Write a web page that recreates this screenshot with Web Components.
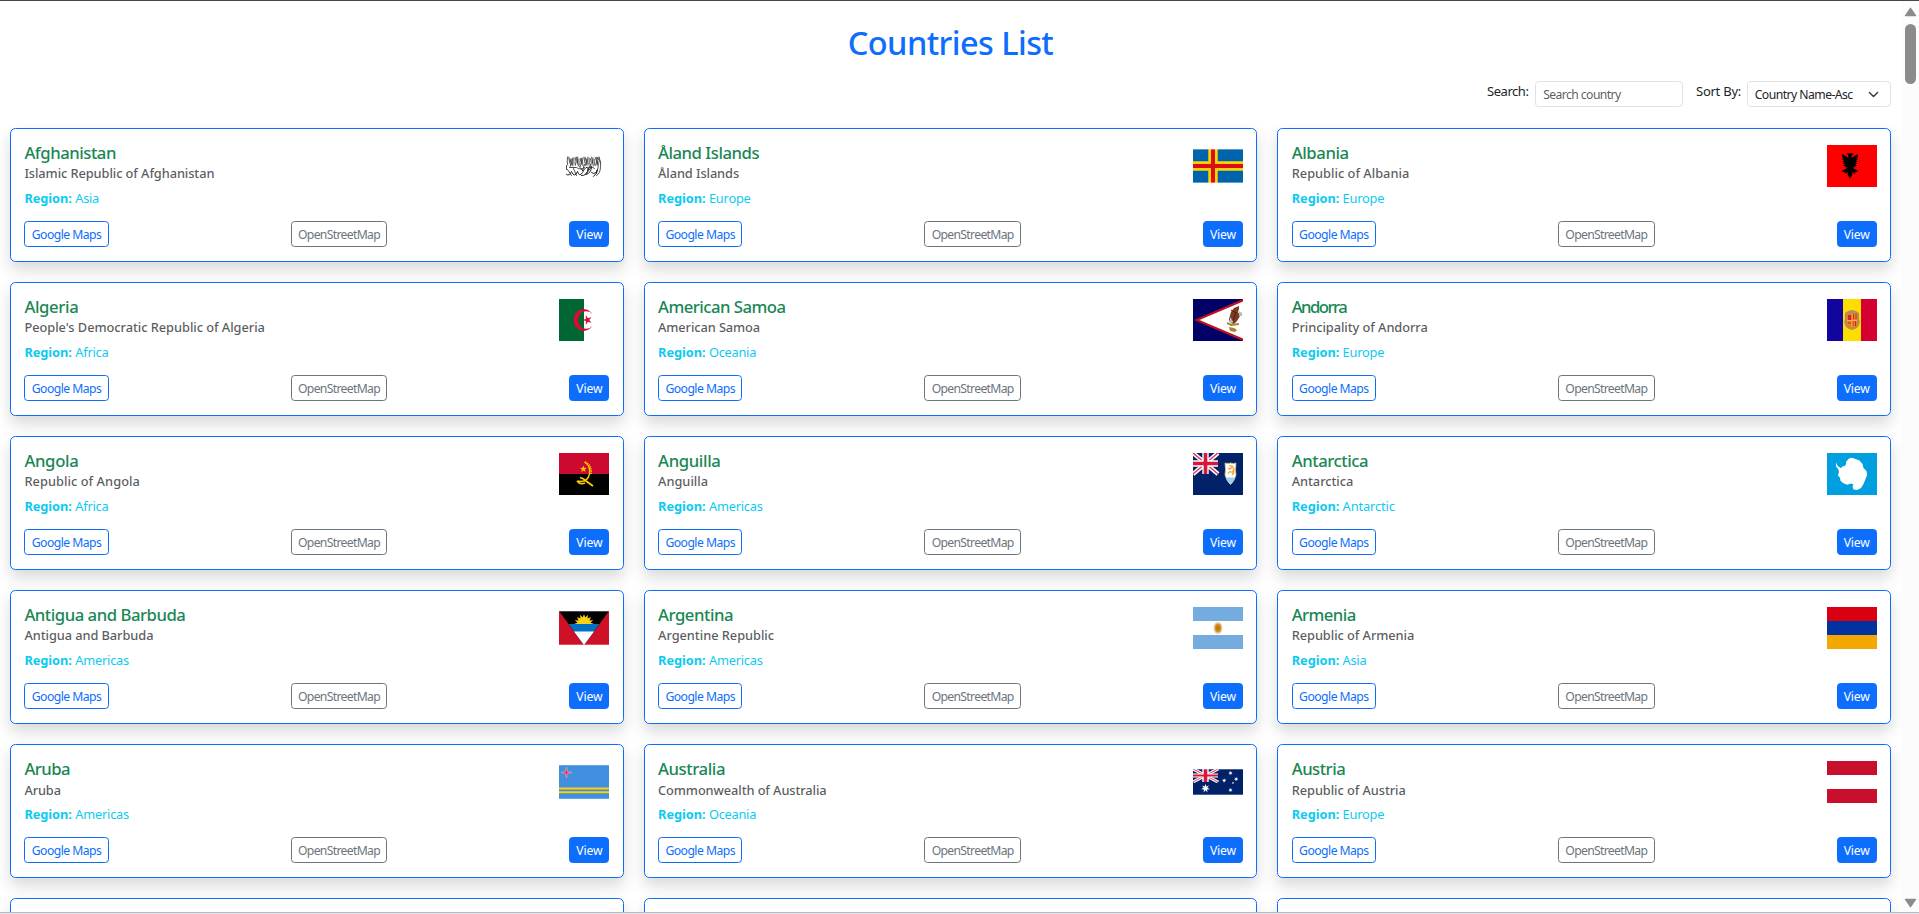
<!DOCTYPE html>
<html lang="en">
<head>
<meta charset="utf-8">
<title>Countries List</title>
<style>
html,body{margin:0;height:100%;overflow:hidden;background:#fff}
body{font-family:"Noto Sans","Open Sans",sans-serif;color:#212529}
</style>
</head>
<body>
<countries-app></countries-app>
<script>
const UNION = `<g><rect width="25" height="21" fill="#012169"/><path d="M0 0L25 21M25 0L0 21" stroke="#fff" stroke-width="4.4"/><path d="M0 0L25 21M25 0L0 21" stroke="#e4405c" stroke-width="1.5"/><path d="M12.5 0V21M0 10.5H25" stroke="#fff" stroke-width="6.4"/><path d="M12.5 0V21M0 10.5H25" stroke="#d8183a" stroke-width="3.6"/></g>`;
const star = (x, y, r, n = 5, k = .42, rot = 0) => {
  const p = [];
  for (let i = 0; i < n * 2; i++) {
    const a = Math.PI * i / n - Math.PI / 2 + rot, q = i % 2 ? r * k : r;
    p.push((x + q * Math.cos(a)).toFixed(2) + ',' + (y + q * Math.sin(a)).toFixed(2));
  }
  return `<polygon points="${p.join(' ')}"/>`;
};
const scribble = (() => {
  let d = '';
  for (let i = 0; i < 13; i++) {
    const x = 9 + i * 2.55;
    d += `M${x} ${11.5 + (i * 7 % 4) * .5}q${i % 2 ? 1.8 : -.8} 4 .2 8M${x + 1.2} ${11.6 + (i * 5 % 3)}l${i % 3 ? .2 : 1} 6`;
  }
  return d;
})();
/* each flag is [height, artwork] on a 50-unit-wide canvas */
const FLAGS = {
  af: [33, `<g transform="translate(-.5 -4.5)" fill="none" stroke="#222" stroke-linecap="round"><path d="${scribble}" stroke-width=".75"/><path d="M8 29q3 2 5-3q3 7 6 0q2 6 5 1q4-8 6-4q-2 8-7 7M27 29q4-5 6-8q0 6-5 8M33 27q4 3 6-3q-1 5-4 7" stroke-width="1"/><path d="M11 22h7q4 3 8 0M29 23q4-3 7 0M38 12q5 2 4 9q0 7-4 9M39 16q2 6-1 12M9 24l4 6M15 23l3 7M8 20v4M20 20l4 5M26 19l-2 6M32 19l-3 6" stroke-width=".8"/></g>`],
  ax: [34, `<rect width="50" height="34" fill="#0064ad"/><path d="M20 0V34M0 17H50" stroke="#ffd300" stroke-width="9.4"/><path d="M20 0V34M0 17H50" stroke="#da0e15" stroke-width="4"/><path d="M0 .4H50M0 33.6H50" stroke="#fff" stroke-opacity=".5" stroke-width=".8"/>`],
  al: [42, `<rect width="50" height="42" fill="#f00"/><path d="M25 13l-1.500-4.200-2.700-.8-2 1.300 2 .2.800 2.300-.6.800-5.800-3.600v4h1.600l-1.600 2h1.900l-1.900 2h2.300l-2 2h2.500l-2 2h2.700l-1.400 1.600 3-.5-1 1.300-4 2v1.500h3l-1 2 3.500-1.700-.2 2.500 2.400 4 2.400-4-.2-2.500 3.500 1.700-1-2h3v-1.500l-4-2-1-1.300 3 .5-1.400-1.600h2.700l-2-2h2.500l-2-2h2.300l-1.900-2h1.900l-1.600-2h1.600v-4l-5.800 3.600-.6-.8.800-2.300 2-.2-2-1.300-2.700.8z" fill="#000"/>`],
  dz: [42, `<rect width="50" height="42" fill="#fff"/><rect width="25" height="42" fill="#063"/><path d="M33.5 15.3a10.3 10.8 0 1 0 0 11.4a8.2 8.8 0 1 1 0-11.4z" fill="#d21034"/><g fill="#d21034">${star(28.4, 21, 5, 5, .38, -Math.PI / 2)}</g>`],
  as: [42, `<rect width="50" height="42" fill="#006"/><path d="M50 0V42L1 21z" fill="#bd1021"/><path d="M50 2.6V39.4L6.5 21z" fill="#fff"/><path d="M46 7l-5 2-3 4-2 7 1 4 4 1 3-3 3-5-2-4 1-3z" fill="#7b3a20"/><path d="M46 12l3 2v3h-3zM37 18l3 4-1 4-2-2z" fill="#b9b9b9"/><path d="M34 23l4 2 8-1v2l-8 1-4-2zM36 28l5 1 3 2-2 2-5-1z" fill="#a9862b"/><path d="M38 11l5 3-3 8" stroke="#4b2217" fill="none"/>`],
  ad: [42, `<rect width="50" height="42" fill="#10069f"/><rect x="16" width="18" height="42" fill="#fedd00"/><rect x="34" width="16" height="42" fill="#d50032"/><path d="M18 14l3-2 4-1 4 1 3 2v6l1 3-2 5-3 2-3 1-3-1-3-2-2-5 1-3z" fill="#b78d55"/><path d="M20 15h10v10q-1 3-5 4q-4-1-5-4z" fill="#e9821a"/><path d="M21 16h3.5v5H21z" fill="#d42230"/><path d="M26 22v5M28.5 22v5M26.5 15v5M29 15v5M21 24h3" stroke="#d42230"/><path d="M20 21.5h10M25 15v13" stroke="#ffd66b" stroke-width=".6"/>`],
  ao: [42, `<rect width="50" height="21" fill="#cc092f"/><rect y="21" width="50" height="21"/><path d="M25.500 9q6.500 4 5 12q-2 9-12 7" fill="none" stroke="#ffcb00" stroke-width="1.4"/><path d="M26 9q7 3 6 12" fill="none" stroke="#ffcb00" stroke-width="1.800" stroke-dasharray="1.3 .9"/><path d="M21 24.500q4 1 6 3.500l7 5M18 28q3 4 8 2" fill="none" stroke="#ffcb00" stroke-width="1.8"/><g fill="#ffcb00">${star(24.4, 16, 3.6)}</g>`],
  ai: [42, `<rect width="50" height="42" fill="#012169"/>${UNION}<path d="M32 10q3 1 5.5 0q3 1 5.5 0q-1 7 0 12q-1.500 6-5.500 9.500q-4-3.500-5.500-9.500q1-5 0-12z" fill="#fff" stroke="#d9c47a" stroke-width=".8"/><path d="M32.800 24.500h9.400q-1.500 4-4.700 6.500q-3.200-2.500-4.700-6.500z" fill="#9ccdf5"/><path d="M35 21q1-3 3-2t3-3q-1-3-3-1t-3 0M36 13q3-1 4 1M40 16q2 3-1 6" fill="none" stroke="#f5a432" stroke-width="1.300"/>`],
  aq: [42, `<rect width="50" height="42" fill="#009fdf"/><path d="M9 9.500l2 4 3 1.500 1.500-1.500 3-1 .8-4 2.700-3 3-.8 3.500 1.200 4 1.600 3 3.500 1 4 3 3 .6 4-1.600 4-2 5-2.500 4-4 2-3.500-.4-1-2.600.8-2.500-2-1-4.300 1.200-4-1.700-2.500-2.200-.5-3-2-2.300.8-3-.3-3-2.500-3z" fill="#fff"/>`],
  ag: [34, `<rect width="50" height="34" fill="#ce1126"/><path d="M0 0H50L25 34z"/><path d="M9.700 13H40.300L25 34z" fill="#0072c6"/><path d="M15 20.500H35L25 34z" fill="#fff"/><g fill="#fcd116"><clipPath id="c"><rect width="50" height="13"/></clipPath><g clip-path="url(#c)">${star(25, 13, 10, 16, .65)}</g></g><path d="M0 .4H50M0 33.600H50" stroke="#fff" stroke-opacity=".4" stroke-width=".8"/>`],
  ar: [42, `<rect width="50" height="42" fill="#fff"/><path d="M0 0H50V14H0zM0 28H50V42H0z" fill="#74acdf"/><ellipse cx="25" cy="21" rx="4.400" ry="6" fill="#e3c9a0"/><ellipse cx="25" cy="21" rx="3" ry="4.200" fill="#d98c1c"/><path d="M24 19v4M26 19v4M24 21h2" stroke="#a3690f" stroke-width=".8"/>`],
  am: [42, `<rect width="50" height="14" fill="#d90012"/><rect y="14" width="50" height="14" fill="#0033a0"/><rect y="28" width="50" height="14" fill="#f2a800"/>`],
  aw: [34, `<rect width="50" height="34" fill="#418fde"/><path d="M0 23.500H50M0 27.200H50" stroke="#ffd100" stroke-width="2"/><g fill="#ff2b40" stroke="#d8cde0" stroke-width=".5">${star(7.500, 7.500, 5.300, 4, .28)}</g><path d="M0 .4H50M0 33.600H50" stroke="#fff" stroke-opacity=".3" stroke-width=".8"/>`],
  au: [26, `<rect width="50" height="26" fill="#012169"/><g transform="scale(1 .619)">${UNION}</g><g fill="#fff">${star(12.500, 19.300, 4.600, 7)}${star(37.500, 4, 2.300, 7)}${star(31.200, 11.500, 2.300, 7)}${star(43.200, 10, 2.300, 7)}${star(37.500, 21, 2.300, 7)}${star(40, 14, 1.300)}</g><path d="M0 .4H50M0 25.600H50" stroke="#fff" stroke-opacity=".4" stroke-width=".8"/>`],
  at: [42, `<rect width="50" height="42" fill="#fff"/><path d="M0 0H50V14H0zM0 28H50V42H0z" fill="#c8102e"/>`]
};
const REGION = { Asia: 75, Europe: 93, Africa: 84.5, Oceania: 98.5, Americas: 105, Antarctic: 103.5 };
/* code, name, name width, official name, official width, region */
const COUNTRIES = [
  ['af', 'Afghanistan', 91.5, 'Islamic Republic of Afghanistan', 190, 'Asia'],
  ['ax', 'Åland Islands', 101, 'Åland Islands', 81, 'Europe'],
  ['al', 'Albania', 57, 'Republic of Albania', 117.5, 'Europe'],
  ['dz', 'Algeria', 54, "People's Democratic Republic of Algeria", 240.5, 'Africa'],
  ['as', 'American Samoa', 127.5, 'American Samoa', 102, 'Oceania'],
  ['ad', 'Andorra', 54.5, 'Principality of Andorra', 136, 'Europe'],
  ['ao', 'Angola', 54, 'Republic of Angola', 115.5, 'Africa'],
  ['ai', 'Anguilla', 62.5, 'Anguilla', 50, 'Americas'],
  ['aq', 'Antarctica', 76.5, 'Antarctica', 61.5, 'Antarctic'],
  ['ag', 'Antigua and Barbuda', 161, 'Antigua and Barbuda', 129, 'Americas'],
  ['ar', 'Argentina', 75, 'Argentine Republic', 116, 'Americas'],
  ['am', 'Armenia', 64, 'Republic of Armenia', 122.5, 'Asia'],
  ['aw', 'Aruba', 45.5, 'Aruba', 36.5, 'Americas'],
  ['au', 'Australia', 67, 'Commonwealth of Australia', 168.5, 'Oceania'],
  ['at', 'Austria', 53.5, 'Republic of Austria', 114, 'Europe'],
  ['az', '', 0, '', 0, ''], ['bs', '', 0, '', 0, ''], ['bh', '', 0, '', 0, '']
];
const define = (name, html, ready) => customElements.define(name, class extends HTMLElement {
  connectedCallback() {
    if (this.shadowRoot) return;
    this.attachShadow({ mode: 'open' }).innerHTML = typeof html === 'function' ? html(this) : html;
    if (ready) ready(this);
  }
});

/* text tracked so that its line takes the width in "w" */
define('fit-text', '<style>:host{display:inline-block;white-space:nowrap}</style><slot></slot>', el => {
  const w = +el.getAttribute('w'), n = el.textContent.length;
  if (!w || !n) return;
  el.style.letterSpacing = ((w - el.getBoundingClientRect().width) / n).toFixed(3) + 'px';
});

define('country-flag', el => {
  const f = FLAGS[el.getAttribute('code')];
  return `<style>:host{display:flex;align-items:center;width:50px;height:42px;flex:none}svg{display:block;overflow:hidden}</style>` +
    (f ? `<svg width="50" height="${f[0]}" viewBox="0 0 50 ${f[0]}">${f[1]}</svg>` : '');
});

define('map-button', el => `<style>
:host{display:flex;box-sizing:border-box;height:26px;align-items:center;justify-content:center;padding-top:1.500px;border:1px solid var(--c);border-radius:3.6px;color:var(--t,var(--c));background:var(--b,transparent);font-size:12.2px;line-height:22px;width:${el.getAttribute('width')}px}
:host([kind=primary]){--c:#0d6efd}:host([kind=secondary]){--c:#6c757d}:host([kind=solid]){--c:#0d6efd;--b:#0d6efd;--t:#fff}
</style><slot></slot>`);

define('country-card', el => {
  const [code, name, nw, off, ow, region] = COUNTRIES[+el.getAttribute('index')];
  return `<style>
:host{display:flex;flex-direction:column;box-sizing:border-box;height:134px;padding:13px 13.350px 13px 13.400px;border:1px solid #0d6efd;border-radius:5.400px;background:#fff;box-shadow:0 7.200px 14.400px rgba(0,0,0,.15)}
.top{display:flex;justify-content:space-between}
.info{display:flex;flex-direction:column;align-items:flex-start;height:65px}
country-flag{margin-top:3px}
.name{font-size:16.700px;line-height:22px;font-weight:500;color:#198754}
.off{font-size:12.800px;line-height:18px;font-weight:500;color:#212529bf;margin-top:.350px}
.region{display:flex;font-size:12.800px;line-height:18px;color:#0dcaf0;margin-top:6.650px}
.region b{font-weight:700;margin-right:3.400px}
.actions{display:flex;justify-content:space-between;margin-top:14.300px}
</style>` + (name ? `<div class="top"><div class="info"><fit-text class="name" w="${nw}">${name}</fit-text><fit-text class="off" w="${ow}">${off}</fit-text>
<div class="region"><b><fit-text w="47.500">Region:</fit-text></b><fit-text w="${REGION[region] - 51.300}">${region}</fit-text></div></div><country-flag code="${code}"></country-flag></div>
<div class="actions"><map-button kind="primary" width="84.300"><fit-text w="69.500">Google Maps</fit-text></map-button><map-button kind="secondary" width="96.500"><fit-text w="82">OpenStreetMap</fit-text></map-button><map-button kind="solid" width="40"><fit-text w="26">View</fit-text></map-button></div>` : '');
});

define('list-controls', `<style>
:host{display:flex;justify-content:flex-end;height:26px;font-size:13px;line-height:20px}
.label{line-height:20px}
.field{box-sizing:border-box;height:26px;border:1px solid #dee2e6;border-radius:3.600px;padding:1px 7.200px 0;font-size:12.200px;line-height:24px;background:#fff;display:flex;justify-content:space-between;align-items:center}
.search{width:148px;margin:0 13px 0 6.500px;color:#212529bf}
.sort{width:144px;margin-left:6px;padding-right:11px;padding-left:6.700px}
</style>
<fit-text class="label" w="41.500">Search:</fit-text><div class="field search"><fit-text w="77.500">Search country</fit-text></div>
<fit-text class="label" w="45">Sort By:</fit-text><div class="field sort"><fit-text w="98">Country Name-Asc</fit-text><svg width="11" height="11" viewBox="0 0 16 16" fill="none" stroke="#343a40" stroke-width="2" stroke-linecap="round" stroke-linejoin="round"><path d="m2 5 6 6 6-6"/></svg></div>`);

define('page-scrollbar', `<style>
:host{display:flex;flex-direction:column;align-items:center;box-sizing:border-box;width:18px;flex:none;background:#fcfcfc;padding:6px 0 4px 1px}
i{display:block;width:11px;height:60px;border-radius:6px;background:#8b8b8b;margin-top:7px}
svg{display:block}.down{margin-top:auto}
</style><svg width="13" height="10"><path d="M6.500 1.300L11.500 8.700H1.500z" fill="#8b8b8b" stroke="#8b8b8b" stroke-width="1.300" stroke-linejoin="round"/></svg><i></i><svg class="down" width="13" height="10"><path d="M6.500 8.700L11.500 1.300H1.500z" fill="#8b8b8b" stroke="#8b8b8b" stroke-width="1.300" stroke-linejoin="round"/></svg>`);

define('countries-app', `<style>
:host{display:flex;flex-direction:column;box-sizing:border-box;height:914px;border-top:1px solid #48464a;border-bottom:1px solid #e4e2ea;overflow:hidden}
.view{display:flex;flex:1;min-height:0;border-bottom:1px solid #b6b8c2}
main{flex:1;min-width:0;overflow:hidden;padding:0 10px}
h1{margin:0;text-align:center;color:#0d6efd;font-size:32.500px;font-weight:500;line-height:40px;padding:22px 0 18px}
.grid{display:grid;grid-template-columns:repeat(3,minmax(0,1fr));gap:20.060px 20px;margin-top:21px}
</style><div class="view"><main><h1><fit-text w="205.500">Countries List</fit-text></h1><list-controls></list-controls>
<div class="grid">${COUNTRIES.map((c, i) => `<country-card index="${i}"></country-card>`).join('')}</div></main><page-scrollbar></page-scrollbar></div>`);
</script>
</body>
</html>
